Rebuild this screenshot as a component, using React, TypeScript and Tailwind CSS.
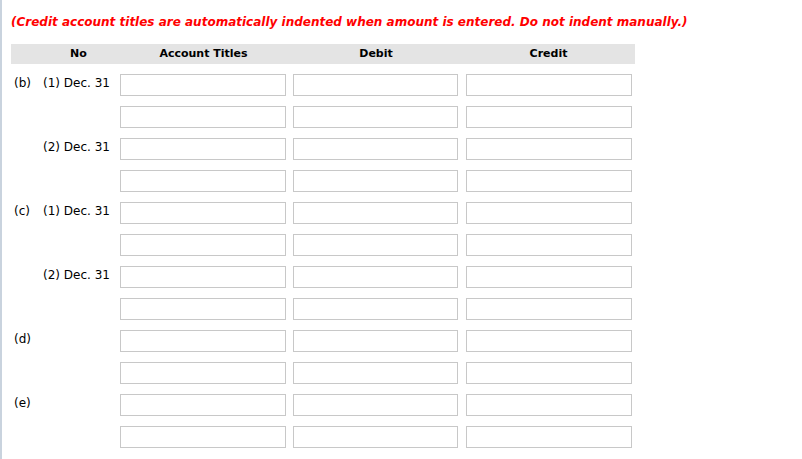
const rows: { part: string; date: string }[] = [
  { part: "(b)", date: "(1) Dec. 31" },
  { part: "", date: "" },
  { part: "", date: "(2) Dec. 31" },
  { part: "", date: "" },
  { part: "(c)", date: "(1) Dec. 31" },
  { part: "", date: "" },
  { part: "", date: "(2) Dec. 31" },
  { part: "", date: "" },
  { part: "(d)", date: "" },
  { part: "", date: "" },
  { part: "(e)", date: "" },
  { part: "", date: "" },
];

function Field({ width }: { width: string }) {
  return (
    <input
      type="text"
      className={`h-[22px] ${width} border border-[#c8c8c8] bg-white outline-none`}
    />
  );
}

export default function App() {
  return (
    <div
      className="min-h-[459px] w-[802px] border-l-2 border-[#c9d3de] bg-white text-[12px] text-black"
      style={{ fontFamily: '"DejaVu Sans", Verdana, sans-serif' }}
    >
      <div className="pl-[9px] pt-[15px]">
        <p className="text-[12px] font-bold italic leading-[14px] text-[#ff0000]">
          (Credit account titles are automatically indented when amount is entered. Do not indent manually.)
        </p>

        <div className="mt-[15px] flex h-[20px] w-[624px] items-center bg-[#e4e4e4] text-[11px] font-bold">
          <div className="w-[29px]" />
          <div className="w-[77px] text-center">No</div>
          <div className="w-[173px] text-center">Account Titles</div>
          <div className="w-[172px] text-center">Debit</div>
          <div className="w-[173px] text-center">Credit</div>
        </div>

        <div className="mt-[10px] flex flex-col gap-[10px]">
          {rows.map((r, i) => (
            <div key={i} className="flex h-[22px] items-start">
              <div className="w-[29px] pl-[3px] pt-[2px] leading-[14px]">{r.part}</div>
              <div className="w-[77px] pl-[3px] pt-[2px] leading-[14px]">{r.date}</div>
              <div className="ml-[3px] flex gap-[7px]">
                <Field width="w-[166px]" />
                <Field width="w-[165px]" />
                <div className="pl-px">
                  <Field width="w-[166px]" />
                </div>
              </div>
            </div>
          ))}
        </div>
      </div>
    </div>
  );
}
